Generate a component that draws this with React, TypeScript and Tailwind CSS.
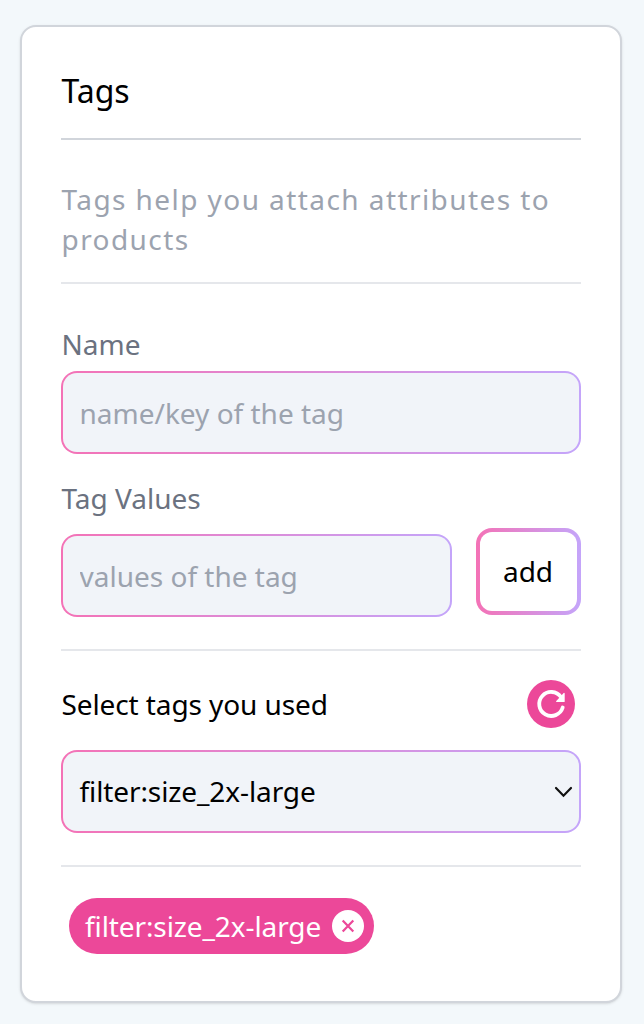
const gradient =
  'bg-[linear-gradient(90deg,#f472b6,#c4a5fa)]';

function Field({ text, className = '' }: { text: string; className?: string }) {
  return (
    <div className={`h-[83px] rounded-[16px] p-[2px] ${gradient} ${className}`}>
      <input
        placeholder={text}
        className="block h-full w-full rounded-[14px] bg-[#f1f4f9] px-[16.5px] text-[28px] text-black outline-none placeholder:text-[#9ca3af]"
      />
    </div>
  );
}

export default function App() {
  return (
    <main className="flex h-[1024px] w-[644px] bg-[#f3f8fb] pt-[25px] pl-[20px] font-['Noto_Sans',sans-serif] text-[28px] leading-[40px]">
      <section className="flex h-[978px] w-[602px] flex-col rounded-[16px] border-2 border-[#d1d5db] bg-white pr-[39px] pl-[39px] shadow-sm">
        <h1 className="mt-[40px] h-[48px] pl-[0.5px] text-[32px] leading-[48px]">Tags</h1>
        <hr className="mt-[23px] border-t-2 border-[#d1d5db]" />
        <p className="mt-[39px] pl-[0.5px] tracking-[1.43px] text-[#9ca3af]">
          Tags help you attach attributes to products
        </p>
        <hr className="mt-[23px] border-t-2 border-[#e5e7eb]" />
        <label className="mt-[40px] pl-[0.5px] text-[#6b7280]">Name</label>
        <Field text="name/key of the tag" className="mt-[7px]" />
        <label className="mt-[24px] pl-[0.5px] text-[#6b7280]">Tag Values</label>
        <div className="mt-[10px] flex items-start justify-between">
          <Field text="values of the tag" className="mt-[6px] w-[391px]" />
          <button className={`h-[87px] w-[105px] rounded-[16px] p-[4px] ${gradient}`}>
            <span className="flex h-full items-center justify-center rounded-[12px] bg-white pr-px pb-[2px]">
              add
            </span>
          </button>
        </div>
        <hr className="mt-[32px] border-t-2 border-[#e5e7eb]" />
        <div className="mt-[29px] flex h-[48px] items-center justify-between pr-[6px]">
          <span className="pb-px pl-[0.5px] tracking-[-0.1px]">Select tags you used</span>
          <button className="size-[48px] rounded-full bg-[#ec4899]">
            <svg viewBox="0 0 48 48" className="size-[48px]" fill="none">
              <path
                d="M34 17A12 12 0 1 0 35.7 27.5"
                stroke="#fff"
                strokeWidth="3.8"
                strokeLinecap="round"
              />
              <path
                d="M37 13.6V21.4H29.8Z"
                fill="#fff"
                stroke="#fff"
                strokeWidth="1.4"
                strokeLinejoin="round"
              />
            </svg>
          </button>
        </div>
        <div className={`mt-[22px] h-[83px] rounded-[16px] p-[2px] ${gradient}`}>
          <div className="flex h-full items-center justify-between rounded-[14px] bg-[#f1f4f9] pr-[6px] pl-[16.5px]">
            <span className="pb-[2px] tracking-[-0.1px]">filter:size_2x-large</span>
            <svg width="19" height="12" viewBox="0 0 19 12" fill="none" stroke="#111" strokeWidth="2.2" strokeLinecap="round">
              <path d="M2 2L9.5 9.7L17 2" />
            </svg>
          </div>
        </div>
        <hr className="mt-[32px] border-t-2 border-[#e5e7eb]" />
        <div className="mt-[31px] ml-[8px] flex h-[56px] w-[305px] items-center justify-between rounded-full bg-[#ec4899] pr-[10px] pl-[16px] text-white">
          <span className="tracking-[-0.1px]">filter:size_2x-large</span>
          <button className="flex size-[32px] items-center justify-center rounded-full bg-white">
            <svg width="16" height="16" viewBox="0 0 16 16" stroke="#ec4899" strokeWidth="2.2">
              <path d="M2.7 2.4L13.3 13.6M13.3 2.4L2.7 13.6" />
            </svg>
          </button>
        </div>
      </section>
    </main>
  );
}
